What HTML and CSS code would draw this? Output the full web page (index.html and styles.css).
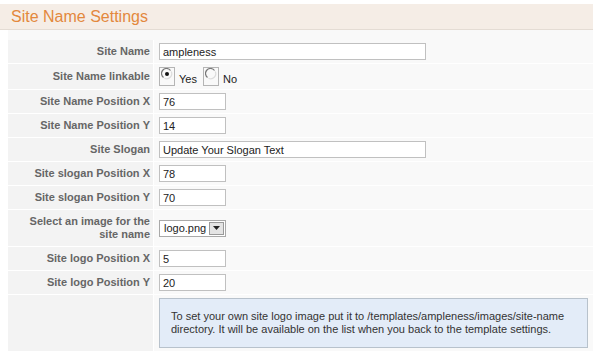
FILE: index.html
```html
<!DOCTYPE html>
<html lang="en">
<head>
    <meta charset="UTF-8">
    <title>Site Name Settings</title>
    <link rel="stylesheet" href="styles.css">
</head>
<body>
    <div class="panel">
        <h3 class="panel-title">Site Name Settings</h3>
        <div class="panel-body">
            <table class="settings">
                <tr>
                    <td class="key">Site Name</td>
                    <td class="val"><input class="text wide" type="text" value="ampleness"></td>
                </tr>
                <tr>
                    <td class="key">Site Name linkable</td>
                    <td class="val">
                        <span class="radio"><svg width="12" height="12" viewBox="0 0 12 12"><path d="M9.5 2.5 A5 5 0 1 0 2.5 9.5" fill="none" stroke="#777" stroke-width="1.2"/><path d="M10.2 3.5 A5 5 0 0 1 3.5 10.2" fill="none" stroke="#ddd" stroke-width="1.2"/><circle cx="6" cy="6" r="2" fill="#111"/></svg></span><span class="opt">Yes</span>
                        <span class="radio"><svg width="12" height="12" viewBox="0 0 12 12"><path d="M9.5 2.5 A5 5 0 1 0 2.5 9.5" fill="none" stroke="#777" stroke-width="1.2"/><path d="M10.2 3.5 A5 5 0 0 1 3.5 10.2" fill="none" stroke="#ddd" stroke-width="1.2"/></svg></span><span class="opt">No</span>
                    </td>
                </tr>
                <tr>
                    <td class="key">Site Name Position X</td>
                    <td class="val"><input class="text short" type="text" value="76"></td>
                </tr>
                <tr>
                    <td class="key">Site Name Position Y</td>
                    <td class="val"><input class="text short" type="text" value="14"></td>
                </tr>
                <tr>
                    <td class="key">Site Slogan</td>
                    <td class="val"><input class="text wide" type="text" value="Update Your Slogan Text"></td>
                </tr>
                <tr>
                    <td class="key">Site slogan Position X</td>
                    <td class="val"><input class="text short" type="text" value="78"></td>
                </tr>
                <tr>
                    <td class="key">Site slogan Position Y</td>
                    <td class="val"><input class="text short" type="text" value="70"></td>
                </tr>
                <tr>
                    <td class="key tall">Select an image for the site name</td>
                    <td class="val">
                        <span class="select"><span class="select-value">logo.png</span><span class="select-btn"><svg width="7" height="4" viewBox="0 0 7 4"><path d="M0 0h7L3.5 4z" fill="#222"/></svg></span></span>
                    </td>
                </tr>
                <tr>
                    <td class="key">Site logo Position X</td>
                    <td class="val"><input class="text short" type="text" value="5"></td>
                </tr>
                <tr>
                    <td class="key">Site logo Position Y</td>
                    <td class="val"><input class="text short" type="text" value="20"></td>
                </tr>
                <tr>
                    <td class="key"></td>
                    <td class="val">
                        <div class="note">To set your own site logo image put it to /templates/ampleness/images/site-name directory. It will be available on the list when you back to the template settings.</div>
                    </td>
                </tr>
            </table>
        </div>
    </div>
</body>
</html>
```

FILE: styles.css
```css
body {
    margin: 0;
    background: #fff;
    font-family: "Liberation Sans", Arial, sans-serif;
    font-size: 11px;
    color: #333;
}

.panel {
    width: 593px;
    padding-top: 4px;
}

.panel-title {
    margin: 0;
    height: 25px;
    line-height: 25px;
    padding-left: 11px;
    background: #f5ede6;
    border-bottom: 1px solid #e4dcd4;
    color: #e3883d;
    font-size: 16px;
    font-weight: normal;
}

.panel-body {
    margin-left: 8px;
    background: #f9f9f9;
    padding-top: 10px;
}

.settings {
    width: 100%;
    border-collapse: separate;
    border-spacing: 0;
}

.settings td {
    border-bottom: 1px solid #fff;
    padding: 3px 0;
}

.key {
    width: 142px;
    padding-right: 3px !important;
    background: #f3f3f3;
    border-right: 1px solid #fff;
    text-align: right;
    font-weight: bold;
    color: #666;
    line-height: 13px;
}

.key.tall {
    padding-top: 5px !important;
    padding-bottom: 5px !important;
}

.val {
    padding-left: 5px !important;
}

.text {
    display: block;
    box-sizing: border-box;
    height: 17px;
    margin: 0;
    padding: 0 3px;
    border: 1px solid #c0c0c0;
    background: #fff;
    font-family: "Liberation Sans", Arial, sans-serif;
    font-size: 11px;
    color: #222;
    outline: none;
}

.text.wide {
    width: 267px;
}

.text.short {
    width: 67px;
}

.radio {
    display: inline-flex;
    align-items: center;
    justify-content: center;
    box-sizing: border-box;
    width: 16px;
    height: 19px;
    border: 1px solid #b5b5b5;
    vertical-align: middle;
    padding-bottom: 5px;
}

.opt {
    display: inline-block;
    margin: 5px 3px 0 4px;
    vertical-align: middle;
    color: #222;
}

.select {
    display: inline-flex;
    box-sizing: border-box;
    height: 17px;
    width: 67px;
    border: 1px solid #a9a9a9;
    background: #fff;
    vertical-align: middle;
}

.select-value {
    flex: 1;
    padding-left: 4px;
    line-height: 15px;
    color: #222;
}

.select-btn {
    display: flex;
    align-items: center;
    justify-content: center;
    width: 15px;
    margin: 1px;
    background: #e4e4e4;
    border: 1px solid #9a9a9a;
    box-sizing: border-box;
}

.note {
    box-sizing: border-box;
    width: 429px;
    padding: 11px 10px 11px 11px;
    background: #e3ecf8;
    border: 1px solid #b8c2cc;
    line-height: 13px;
    color: #333;
}
```
